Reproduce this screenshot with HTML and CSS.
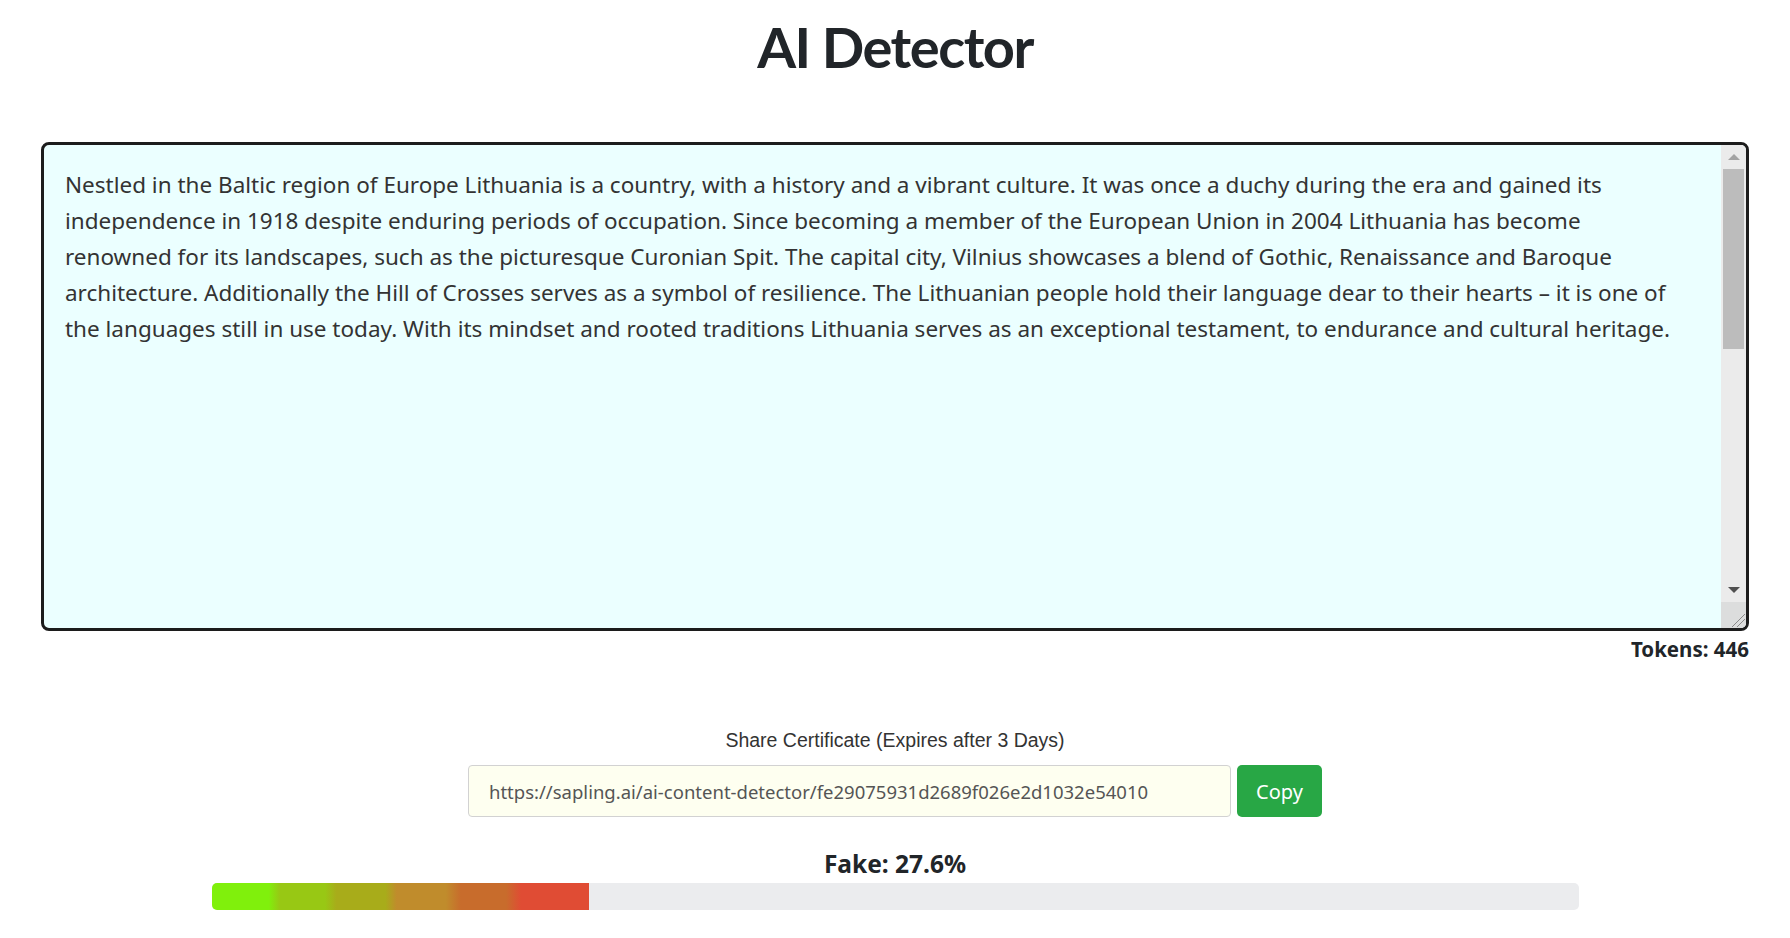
FILE: index.html
```html
<!DOCTYPE html>
<html lang="en">

<head>
    <meta charset="UTF-8">
    <meta name="viewport" content="width=device-width, initial-scale=1.0">
    <title>AI Detector</title>
    <link rel="stylesheet" href="styles.css">
</head>

<body>
    <h1 class="title">AI Detector</h1>

    <div class="editor">
        <div class="editor-text">Nestled in the Baltic region of Europe Lithuania is a country, with a history and a vibrant culture. It was once a duchy during the era and gained its independence in 1918 despite enduring periods of occupation. Since becoming a member of the European Union in 2004 Lithuania has become renowned for its landscapes, such as the picturesque Curonian Spit. The capital city, Vilnius showcases a blend of Gothic, Renaissance and Baroque architecture. Additionally the Hill of Crosses serves as a symbol of resilience. The Lithuanian people hold their language dear to their hearts – it is one of the languages still in use today. With its mindset and rooted traditions Lithuania serves as an exceptional testament, to endurance and cultural heritage.</div>
        <div class="scrollbar">
            <div class="scroll-btn"><span class="arrow-up"></span></div>
            <div class="scroll-track">
                <div class="scroll-thumb"></div>
            </div>
            <div class="scroll-btn"><span class="arrow-down"></span></div>
            <div class="resizer">
                <svg width="22" height="22" viewBox="0 0 22 22">
                    <line x1="8" y1="21" x2="21" y2="8" stroke="#8a8a8a" stroke-width="1" />
                    <line x1="13" y1="21" x2="21" y2="13" stroke="#8a8a8a" stroke-width="1" />
                </svg>
            </div>
        </div>
    </div>

    <div class="tokens">Tokens: 446</div>

    <div class="share">
        <div class="share-label">Share Certificate (Expires after 3 Days)</div>
        <div class="share-row">
            <input class="share-input" type="text" readonly value="https://sapling.ai/ai-content-detector/fe29075931d2689f026e2d1032e54010">
            <button class="copy-btn">Copy</button>
        </div>
    </div>

    <div class="result">
        <div class="result-label">Fake: 27.6%</div>
        <div class="meter">
            <div class="meter-fill" style="width: 27.6%;"></div>
        </div>
    </div>
</body>

</html>
```

FILE: styles.css
```css
body {
    margin: 0;
    padding: 0 41px;
    background-color: #fff;
    color: #212529;
    font-family: "Noto Sans", "Open Sans", sans-serif;
}

.title {
    margin: 13px 0 0;
    font-family: Lato, "Noto Sans", sans-serif;
    font-size: 56px;
    font-weight: 700;
    letter-spacing: -1.5px;
    line-height: 67px;
    text-align: center;
    color: #212529;
}

.editor {
    display: flex;
    margin-top: 62px;
    height: 483px;
    border: 3px solid #1c1c1c;
    border-radius: 8px;
    background-color: #ebffff;
    overflow: hidden;
}

.editor-text {
    flex: 1;
    padding: 22px 36px 0 21px;
    font-size: 22.5px;
    line-height: 36px;
    color: #333;
}

.scrollbar {
    width: 25px;
    display: flex;
    flex-direction: column;
    background-color: #ebebeb;
}

.scroll-btn {
    height: 24px;
    display: flex;
    align-items: center;
    justify-content: center;
}

.arrow-up {
    width: 0;
    height: 0;
    border-left: 6px solid transparent;
    border-right: 6px solid transparent;
    border-bottom: 6px solid #a3a3a3;
}

.arrow-down {
    width: 0;
    height: 0;
    border-left: 6px solid transparent;
    border-right: 6px solid transparent;
    border-top: 6px solid #505050;
}

.scroll-track {
    flex: 1;
    padding: 0 2px;
}

.scroll-thumb {
    height: 180px;
    background-color: #bcbcbc;
}

.resizer {
    height: 26px;
    background-color: #dcdddd;
    display: flex;
    align-items: flex-end;
    justify-content: flex-end;
}

.tokens {
    margin-top: 4px;
    text-align: right;
    font-size: 20.5px;
    font-weight: 700;
    color: #212529;
}

.share {
    margin-top: 66px;
    text-align: center;
}

.share-label {
    font-family: "Liberation Sans", Arial, sans-serif;
    font-size: 19.5px;
    color: #333;
}

.share-row {
    display: flex;
    justify-content: center;
    gap: 6px;
    margin-top: 13px;
}

.share-input {
    width: 763px;
    height: 52px;
    box-sizing: border-box;
    padding: 0 20px;
    border: 1px solid #d2d2d2;
    border-radius: 4px;
    background-color: #fefff0;
    font-family: "Noto Sans", "Open Sans", sans-serif;
    font-size: 18.5px;
    color: #555;
}

.copy-btn {
    width: 85px;
    height: 52px;
    border: none;
    border-radius: 5px;
    background-color: #28a745;
    color: #fff;
    font-family: "Noto Sans", "Open Sans", sans-serif;
    font-size: 20px;
    cursor: pointer;
}

.result {
    margin-top: 30px;
    text-align: center;
}

.result-label {
    font-size: 24.5px;
    font-weight: 700;
    color: #212529;
}

.meter {
    width: 1367px;
    height: 27px;
    margin: 3px auto 0;
    border-radius: 5px;
    background-color: #ebecee;
    overflow: hidden;
}

.meter-fill {
    height: 100%;
    background: linear-gradient(to right,
        #80f00c 0%, #80f00c 15%,
        #98c814 18%, #98c814 30%,
        #a8ac1a 33%, #a8ac1a 46%,
        #c08c2c 49%, #c08c2c 62%,
        #c86c2c 66%, #c86c2c 78%,
        #e04c34 82%, #e04c34 100%);
}
```
